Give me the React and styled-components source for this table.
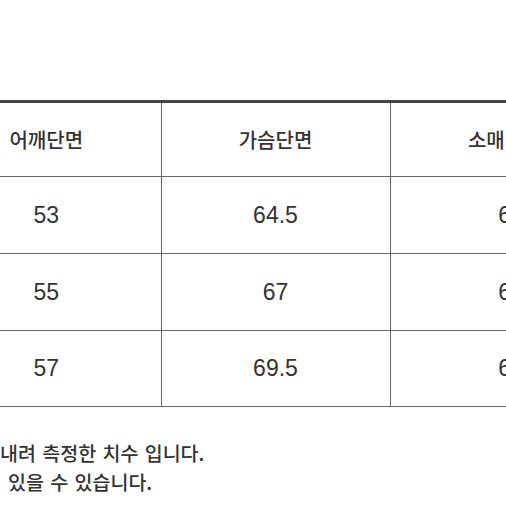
import React from "react";
import styled, { createGlobalStyle } from "styled-components";

const Global = createGlobalStyle`
  html, body { margin: 0; padding: 0; background: #fff; }
  body { width: 506px; height: 506px; overflow: hidden; font-family: "Liberation Sans", "Noto Sans CJK KR", sans-serif; color: #333; }
`;

const Page = styled.div`
  width: 506px;
  height: 506px;
  overflow: hidden;
  padding-top: 100px;
  box-sizing: border-box;
`;

const Table = styled.table`
  margin-left: -68px;
  width: 687px;
  table-layout: fixed;
  border-collapse: collapse;
  border-top: 3px solid #444;
`;

const Col = styled.col`
  width: 229px;
`;

const HeadCell = styled.th`
  height: 73px;
  padding: 0;
  font-family: "Noto Sans CJK KR", sans-serif;
  font-size: 20px;
  font-weight: 500;
  color: #333;
  text-align: center;
  vertical-align: middle;
  border-bottom: 1px solid #666;
  border-left: 1px solid #666;
  &:first-child { border-left: none; }
`;

const Cell = styled.td`
  height: ${(p) => p.$h}px;
  padding: 0;
  font-family: "Liberation Sans", "Noto Sans CJK KR", sans-serif;
  font-size: 23px;
  color: #333;
  text-align: center;
  vertical-align: middle;
  border-bottom: 1px solid #666;
  border-left: 1px solid #666;
  &:first-child { border-left: none; }
`;

const Notes = styled.div`
  margin-top: 31px;
`;

const Note = styled.p`
  margin: 0;
  padding-left: ${(p) => p.$indent}px;
  font-family: "Noto Sans CJK KR", sans-serif;
  font-size: 19.5px;
  font-weight: 500;
  word-spacing: 2px;
  line-height: 29px;
  color: #333;
  white-space: pre;
`;

const rows = [
  ["53", "64.5", "6", 76],
  ["55", "67", "6", 76],
  ["57", "69.5", "6", 75],
];

export default function App() {
  return (
    <>
      <Global />
      <Page>
        <Table>
          <colgroup>
            <Col />
            <Col />
            <Col />
          </colgroup>
          <thead>
            <tr>
              <HeadCell>어깨단면</HeadCell>
              <HeadCell>가슴단면</HeadCell>
              <HeadCell>소매기장</HeadCell>
            </tr>
          </thead>
          <tbody>
            {rows.map((r) => (
              <tr key={r[0]}>
                <Cell $h={r[3]}>{r[0]}</Cell>
                <Cell $h={r[3]}>{r[1]}</Cell>
                <Cell $h={r[3]}>{r[2]}</Cell>
              </tr>
            ))}
          </tbody>
        </Table>
        <Notes>
          <Note $indent={0}>내려 측정한 치수 입니다.</Note>
          <Note $indent={8}>있을 수 있습니다.</Note>
        </Notes>
      </Page>
    </>
  );
}
